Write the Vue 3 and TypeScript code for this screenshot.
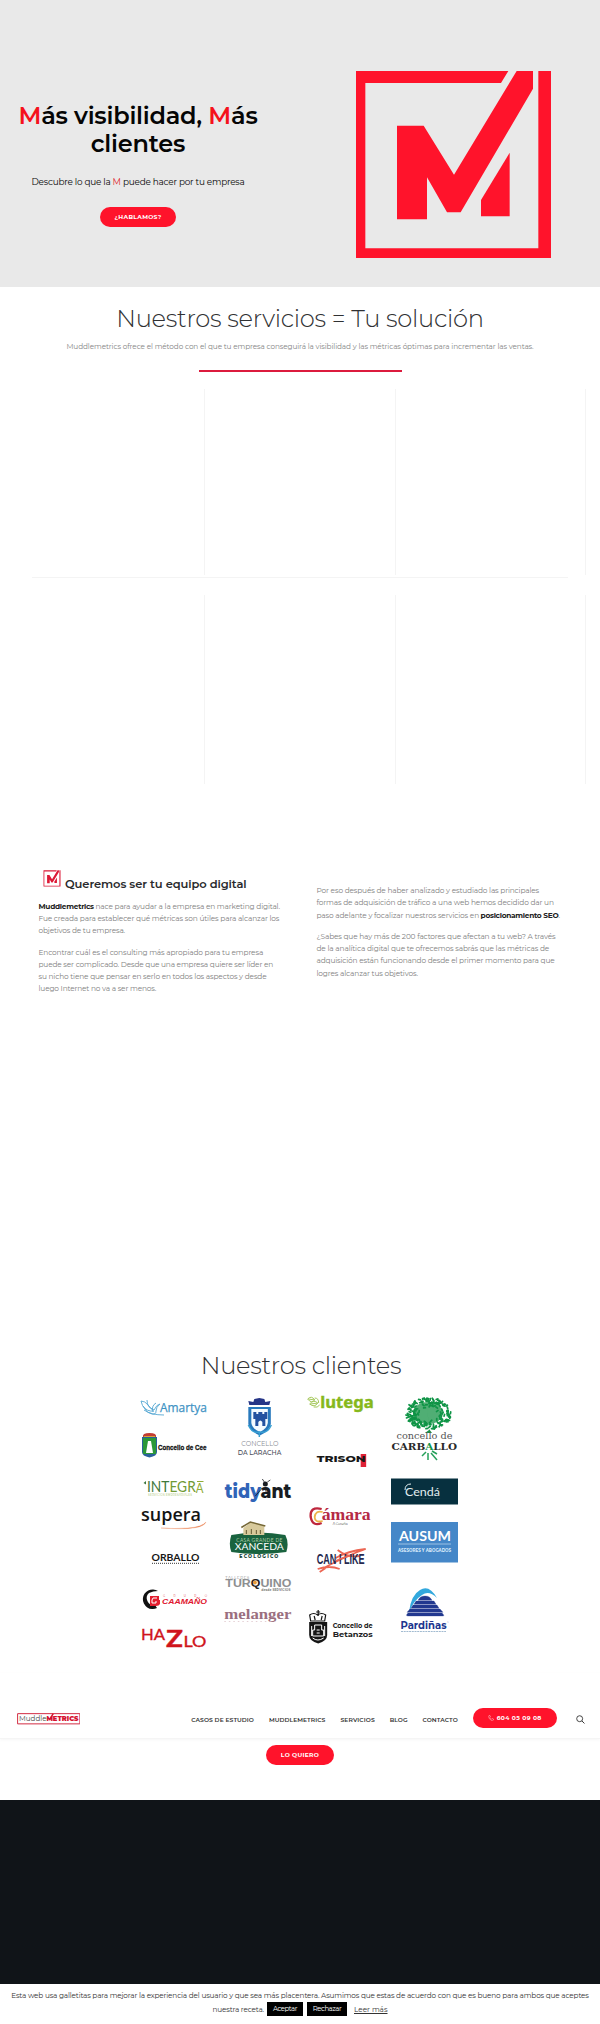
<script setup lang="ts">
interface Segment { text: string; strong?: boolean; width: number }
type Line = Segment[]

// Spreads the letters of a single line so that it fills the given width.
const vFit = {
  mounted(el: HTMLElement, binding: { value: number }) {
    const count = (el.textContent ?? '').trim().length
    const natural = el.getBoundingClientRect().width
    el.style.letterSpacing = `${(binding.value - natural) / count}px`
  },
}

const leftText: Line[][] = [
  [
    [{ text: 'Muddlemetrics', strong: true, width: 55.3 }, { text: 'nace para ayudar a la empresa en marketing digital.', width: 184.5 }],
    [{ text: 'Fue creada para establecer qué métricas son útiles para alcanzar los', width: 240.8 }],
    [{ text: 'objetivos de tu empresa.', width: 86.5 }],
  ],
  [
    [{ text: 'Encontrar cuál es el consulting más apropiado para tu empresa', width: 224.6 }],
    [{ text: 'puede ser complicado. Desde que una empresa quiere ser líder en', width: 234.6 }],
    [{ text: 'su nicho tiene que pensar en serlo en todos los aspectos y desde', width: 228 }],
    [{ text: 'luego Internet no va a ser menos.', width: 117.6 }],
  ],
]
const rightText: Line[][] = [
  [
    [{ text: 'Por eso después de haber analizado y estudiado las principales', width: 222.5 }],
    [{ text: 'formas de adquisición de tráfico a una web hemos decidido dar un', width: 237.3 }],
    [{ text: 'paso adelante y focalizar nuestros servicios en', width: 162.5 }, { text: 'posicionamiento SEO', strong: true, width: 77.8 }, { text: '.', width: 2 }],
  ],
  [
    [{ text: '¿Sabes que hay más de 200 factores que afectan a tu web? A través', width: 239 }],
    [{ text: 'de la analítica digital que te ofrecemos sabrás que las métricas de', width: 232.6 }],
    [{ text: 'adquisición están funcionando desde el primer momento para que', width: 238 }],
    [{ text: 'logres alcanzar tus objetivos.', width: 101.3 }],
  ],
]
const columns = [leftText, rightText]
const nav = [
  { text: 'CASOS DE ESTUDIO', width: 62.8 },
  { text: 'MUDDLEMETRICS', width: 56.4 },
  { text: 'SERVICIOS', width: 34.4 },
  { text: 'BLOG', width: 17.8 },
  { text: 'CONTACTO', width: 35.2 },
]

// Deterministic scatter of leaf strokes around the crown of the tree.
const noise = (n: number) => {
  const v = Math.sin(n * 127.1) * 43758.5453
  return v - Math.floor(v)
}
const leaves = Array.from({ length: 170 }, (_, i) => {
  const a = noise(i + 1) * Math.PI * 2
  const r = 0.35 + 0.65 * Math.sqrt(noise(i + 301))
  return { x: 428.5 + Math.cos(a) * r * 22.5, y: 113.5 + Math.sin(a) * r * 15.5, angle: noise(i + 601) * 180 }
})
</script>

<template>
  <main class="page">
    <section class="hero">
      <div class="hero-copy">
        <h1>
          <span v-fit="239" class="line"><em>M</em>ás visibilidad, <em>M</em>ás</span><br>
          <span v-fit="94.5" class="line">clientes</span>
        </h1>
        <p class="lead"><span v-fit="213" class="line">Descubre lo que la <em>M</em> puede hacer por tu empresa</span></p>
        <a class="pill talk"><span v-fit="47" class="line">¿HABLAMOS?</span></a>
      </div>
      <svg class="hero-logo" viewBox="168 93 585 560" preserveAspectRatio="none">
        <g fill="#ff132b">
          <path d="M168 93H625L603 129H196V624H715V93H753V653H168Z" />
          <path d="M291 257H371L462 404L650 93H699V146L482 516H441L381 411V537H291Z" />
          <path d="M629 338V528H543V479Z" />
        </g>
      </svg>
    </section>

    <section class="services">
      <h2><span v-fit="367.5" class="line">Nuestros servicios = Tu solución</span></h2>
      <p><span v-fit="467" class="line">Muddlemetrics ofrece el método con el que tu empresa conseguirá la visibilidad y las métricas óptimas para incrementar las ventas.</span></p>
      <div class="rule"></div>
      <div class="grid first"><i></i><i></i><i></i></div>
      <div class="separator"></div>
      <div class="grid"><i></i><i></i><i></i></div>
    </section>

    <section class="team">
      <article v-for="(column, c) in columns" :key="c">
        <h3 v-if="c === 0">
          <svg viewBox="150 80 620 590" preserveAspectRatio="none">
            <g fill="#dc1936">
              <path d="M168 93H625L603 129H196V624H715V93H753V653H168Z" />
              <path d="M291 257H371L462 404L650 93H699V146L482 516H441L381 411V537H291Z" />
              <path d="M629 338V528H543V479Z" />
            </g>
          </svg>
          <span v-fit="181.5" class="line">Queremos ser tu equipo digital</span>
        </h3>
        <p v-for="(para, p) in column" :key="p">
          <span v-for="(row, r) in para" :key="r" class="row">
            <span v-for="(s, i) in row" :key="i" v-fit="s.width" class="line" :class="{ strong: s.strong, stop: s.text === '.' }">{{ s.text }}</span>
          </span>
        </p>
      </article>
    </section>

    <section class="clients">
      <h2><span v-fit="200.5" class="line">Nuestros clientes</span></h2>
      <div class="wall">
        <div class="stack">
          <svg viewBox="140 93 67 27" height="27">
            <g fill="none" stroke="#55a7d3" stroke-width=".9"><path d="M141 101q4 0 7 4t6 5q3-6 6-6-4 3-4 7t-4 3q-5-1-7-5-3-3-4-8M147 100q0 7 6 10M156 103q-5 3-3 9M143 106q4 6 11 5M144 110q7 5 20 5" /></g>
            <text x="160" y="111.7" font-size="12.300" textLength="47" lengthAdjust="spacingAndGlyphs" fill="#3f93c4" stroke="#3f93c4" stroke-width=".25" class="open">Amartya</text>
          </svg>
          <svg viewBox="140 120 67 45" height="45">
            <path d="M142 137h15v15q0 4-7.500 5.500-7.500-1.500-7.500-5.500Z" fill="#2a5f9b" /><path d="M143 138h13v16h-13Z" fill="#2b9838" />
            <path d="M148 141h3l1 6 1 6h-7l1-6Z" fill="#fff" /><path d="M143 137q-1-4 6.500-4t6.500 4Z" fill="#c33c32" /><path d="M144 136.500h11" stroke="#d7a438" />
            <text x="158" y="150" font-size="8" font-weight="700" textLength="48.500" lengthAdjust="spacingAndGlyphs" fill="#111" stroke="#111" stroke-width=".3" class="sans">Concello de Cee</text>
          </svg>
          <svg viewBox="140 165 67 37" height="37">
            <path d="M143.500 183l2.500-2v3.500Z" fill="#3a743b" />
            <text x="147" y="191.500" font-size="15" textLength="56.500" lengthAdjust="spacingAndGlyphs" fill="#3f7a3c" class="lato">INT<tspan fill="#719a35">EGR</tspan><tspan dy="1.500" font-size="12.500" fill="#91ad38">A</tspan></text>
            <path d="M197 181.500h6.500" stroke="#91ad38" />
            <text x="148" y="195.700" font-size="2.700" textLength="44" fill="#95b650">SERVICIOS EMPRESARIALES</text>
          </svg>
          <svg viewBox="140 202 67 38" height="38">
            <text x="141" y="220.500" font-size="18" font-weight="600" textLength="60" lengthAdjust="spacingAndGlyphs" fill="#141414" class="open">supera</text>
            <path d="M161 228q42 3 45-6-4 5-18 6t-27 0" fill="#e98355" stroke="#e98355" stroke-width=".3" />
          </svg>
          <svg viewBox="140 240 67 35" height="35">
            <text x="151.500" y="261" font-size="9.300" textLength="48" lengthAdjust="spacingAndGlyphs" fill="#171717" font-weight="700" class="lato">ORBALLO</text>
            <path d="M152 263.300h47" stroke="#333" stroke-width="1" stroke-dasharray="1 1" />
          </svg>
          <svg viewBox="140 275 67 45" height="45">
            <path d="M158 291a9.800 9.800 0 1 0-1 17l-2-3a7 7 0 0 1-6-12q4-2 9-2" fill="#111" /><path d="M150 296h9v4h1v4q-1 2-4 2h-6Z" fill="#e31e2f" /><path d="M157 298h-4l-1 2v3h4v-2" fill="none" stroke="#fff" />
            <text x="163" y="297" font-size="2.800" textLength="44" fill="#d73442">GRUPO</text>
            <text x="162" y="304.400" font-size="7.300" font-style="italic" font-weight="700" textLength="45" lengthAdjust="spacingAndGlyphs" fill="#df1730" class="sans">CAAMAÑO</text>
          </svg>
          <svg viewBox="140 320 67 35" height="35" fill="#d0141b" class="lato" font-weight="400" stroke="#d0141b" stroke-width=".35">
            <text x="141" y="340" font-size="16" textLength="24" lengthAdjust="spacingAndGlyphs">HA</text>
            <text x="166" y="346.500" font-size="23.500" font-weight="700" textLength="17" lengthAdjust="spacingAndGlyphs">Z</text>
            <text x="183.500" y="346.500" font-size="15.500" textLength="23" lengthAdjust="spacingAndGlyphs">LO</text>
          </svg>
        </div>
        <div class="stack">
          <svg viewBox="223.67 93 67 77" height="77">
            <path d="M248 107h22.500v17q-1 7-11 11.500-10.500-4.500-11.500-11.500Z" fill="#2879bd" /><path d="M251 109h16.500v14q-1 6-8 9-7.500-3-8.500-9Z" fill="#f4fbff" />
            <path d="M249 105l-1-4 5 1 1-3 5-1 5 1 1 3 5-1-1 4Z" fill="#263587" /><path d="M253 112h3v2h2v-2h4v2h2v-2h3v7h-2v7h-3v-4q-2-3-4 0v4h-3v-7h-2Z" fill="#2452a0" />
            <path d="M248 125q4 9 11 7v5m12-12q-4 9-11 7" fill="none" stroke="#39a0d3" stroke-width="1.500" />
            <text x="241" y="146" font-size="7" textLength="37" lengthAdjust="spacingAndGlyphs" fill="#8c8f98">CONCELLO</text><text x="237.500" y="154.500" font-size="7" font-weight="500" textLength="43.500" lengthAdjust="spacingAndGlyphs" fill="#494c59">DA LARACHA</text>
          </svg>
          <svg viewBox="223.67 170 67 46" height="46">
            <text x="224.500" y="198" font-size="20" font-weight="800" textLength="66.500" lengthAdjust="spacingAndGlyphs" fill="#3064b8">tidy<tspan fill="#181c22">ant</tspan></text>
            <circle cx="265" cy="184" r="2.500" fill="#181c22" /><path d="M264 182l-2-3m5 3 3-2m-15 16 7-8m3 0 1 5" fill="none" stroke="#181c22" stroke-width=".8" />
          </svg>
          <svg viewBox="223.67 216 67 51" height="51">
            <path d="M231 235q28-5 54 0 4 8 1 17-27 4-55 0-3-8 0-17" fill="#1a633f" />
            <path d="M243 235v-7l8-6 13 4v9Z" fill="#d7c99b" /><path d="M241 227.500l9-5.500 15 4" stroke="#756736" fill="none" stroke-width="1.500" /><path d="M246 230v4m5-5v5m5-4v4m4-4v4" stroke="#635b34" />
            <text x="236" y="241.500" font-size="4.900" textLength="46" fill="#acd0a7" class="lato">CASA GRANDE DE</text><text x="234.500" y="250" font-size="10" textLength="49" lengthAdjust="spacingAndGlyphs" fill="#fff" class="lato">XANCEDA</text><text x="239" y="258" font-size="4.700" font-weight="800" textLength="39" fill="#1c4a3b">ECOLOGICO</text>
          </svg>
          <svg viewBox="223.67 267 67 37" height="37">
            <text x="225" y="279" font-size="4" textLength="24" fill="#888">TALLERES</text>
            <text x="225" y="286.500" font-size="10.500" font-weight="700" textLength="66" lengthAdjust="spacingAndGlyphs" fill="#8e8f91" class="sans">TUR<tspan fill="#242322">Q</tspan>UINO</text><circle cx="254.500" cy="282.500" r="2" fill="#e79a3b" />
            <text x="261" y="291" font-size="3" textLength="29" font-weight="700" fill="#777">desde SERVICIOS</text>
          </svg>
          <svg viewBox="223.67 304 67 36" height="36">
            <text x="224" y="318.500" font-size="15.500" font-weight="700" textLength="67" lengthAdjust="spacingAndGlyphs" fill="#9b6f7f" class="serif">melanger</text><path d="M224 321.500h53" stroke="#d8bbc3" stroke-width=".7" stroke-dasharray="1.500 3" />
          </svg>
        </div>
        <div class="stack">
          <svg viewBox="307.33 93 67 50" height="50">
            <g fill="none" stroke="#a5c85b"><path d="M308 99q4-4 7 1-3 4-7-1M310 104q4-5 8-1-3 5-8 1M315 98q4 0 4 5M314 107q4 1 6-2M309 99l6 1m-4 4 7-1" /></g>
            <text x="320.500" y="107.500" font-size="16" font-weight="700" textLength="53.500" lengthAdjust="spacingAndGlyphs" fill="#86b81c" stroke="#86b81c" stroke-width=".4" class="noto">lutega</text>
          </svg>
          <svg viewBox="307.33 143 67 57" height="57">
            <path d="M361 154h5.500v13H361Z" fill="#df2136" /><text x="317" y="162" font-size="8" font-weight="800" textLength="49" lengthAdjust="spacingAndGlyphs" fill="#171717">TRISON</text>
          </svg>
          <svg viewBox="307.33 200 67 36" height="36">
            <path d="M322 209q-12-3-11 8 2 10 11 6" stroke="#be273d" stroke-width="2.300" fill="none" /><path d="M323 212q-7-2-8 5 0 6 8 4" fill="none" stroke="#edb34a" stroke-width="1.800" />
            <text x="322" y="220" font-size="16" font-weight="700" textLength="49" lengthAdjust="spacingAndGlyphs" fill="#b52a45" class="serif">ámara</text><text x="333" y="225" font-size="3.300" textLength="15" fill="#333">A Coruña</text>
          </svg>
          <svg viewBox="307.33 236 67 64" height="64">
            <path d="M324 268q27-14 42-19-18 2-30 9M338 250q10 8 22 6m-42 13q12-4 22 0m-20 3 6-4" fill="none" stroke="#ec6653" stroke-width="1.800" />
            <text x="317" y="263.500" font-size="14" font-weight="700" textLength="48" lengthAdjust="spacingAndGlyphs" fill="#25284f" class="sans">CAN I LIKE</text><path d="M336 261q8-4 14-5" stroke="#ec6653" stroke-width="1.500" fill="none" />
          </svg>
          <svg viewBox="307.33 300 67 55" height="55">
            <path d="M309.500 322h18v13q0 6-9 8.500-9-2.500-9-8.500Z" fill="#151515" /><path d="M311 321l-1-6q4-3 8 0 4-3 8 0l-1 6ZM318.500 310v6m-2-4h4m-6 4 1 4m7-4-1 4" fill="none" stroke="#151515" stroke-width="1.200" />
            <path d="M315 325h7v5h2v6h-11v-6h2Zm2 5h3m-3 3h3m-8-7v10m13-10v10m-12 2q5 4 11 0" fill="none" stroke="#fff" stroke-width="1" />
            <g font-weight="700" fill="#222"><text x="333" y="327.500" font-size="7" textLength="40" lengthAdjust="spacingAndGlyphs">Concello de</text><text x="333" y="336.500" font-size="7.800" textLength="40" lengthAdjust="spacingAndGlyphs">Betanzos</text></g>
          </svg>
        </div>
        <div class="stack">
          <svg viewBox="391 93 67 77" height="77">
            <path d="M427 104l2 26-4 3h7l-3-4Z" fill="#159345" /><ellipse cx="428" cy="113" rx="15" ry="11" fill="#159345" opacity=".75" />
            <rect v-for="(leaf, i) in leaves" :key="i" :x="leaf.x - 1.7" :y="leaf.y - .8" width="3.400" height="1.700" rx=".6" fill="#0f9446" :transform="`rotate(${leaf.angle} ${leaf.x} ${leaf.y})`" />
            <text x="396.500" y="138.500" font-size="9.500" textLength="56" lengthAdjust="spacingAndGlyphs" fill="#555" class="slab">concello de</text>
            <text x="391.500" y="149.500" font-size="10" font-weight="700" textLength="65.500" lengthAdjust="spacingAndGlyphs" fill="#292929" class="slab">CARB<tspan fill="#13954a">A</tspan>LLO</text>
            <path d="M426 152l-4 4m6-3v7m3-7 6 7m-5-9 5 3" stroke="#27a15b" stroke-width="1.500" />
          </svg>
          <svg viewBox="391 170 67 44" height="44"><path d="M391 178.500h67v26h-67Z" fill="#07303f" /><path d="M405 190q0-6 6-6" stroke="#e2eef0" fill="none" /><text x="405" y="195.500" font-size="12" textLength="35" lengthAdjust="spacingAndGlyphs" fill="#e2eef0" class="lato">Cendá</text><text x="421" y="199" font-size="2.300" textLength="19" fill="#58737d">CONSULTING</text></svg>
          <svg viewBox="391 214 67 60" height="60"><path d="M391 222h67v40.500h-67Z" fill="#4587c8" /><text x="399" y="241" font-size="14" font-weight="700" textLength="52" lengthAdjust="spacingAndGlyphs" fill="#fff" class="lato">AUSUM</text><path d="M398 244h53" stroke="#bfd8ef" stroke-width=".7" /><text x="398" y="252" font-size="4.500" font-weight="700" textLength="53" lengthAdjust="spacingAndGlyphs" fill="#dcecfb">ASESORES Y ABOGADOS</text></svg>
          <svg viewBox="391 274 67 81" height="81"><path d="M409 312q2-17 11-22 9-6 17 8-8-8-15-3-8 5-13 17" fill="#32a8dd" /><path d="M425 296q-5 0-7 4.300h14q-2-4.300-7-4.300m-9 5-2 3.300h22l-2-3.300Zm-3 4-2 3.300h28l-2-3.300Zm-3 4-3 3.300h36l-3-3.300Zm-2 4q-3 3 0 3h35q2 0-1-3Z" fill="#22398f" stroke="#22398f" stroke-width=".3" /><text x="400.500" y="329" font-size="10" font-weight="700" textLength="46" lengthAdjust="spacingAndGlyphs" fill="#20358e">Pardiñas</text><text x="447" y="323" font-size="2" fill="#20358e">®</text><path d="M401 331.500h45" stroke="#8aa9c5" stroke-width=".8" stroke-dasharray="2 .7" /></svg>
        </div>
      </div>
    </section>

    <header class="bar">
      <svg class="brand" viewBox="0 0 64 12"><path d="M.6.600H63.400V10.900H.6Z" fill="none" stroke="#d22942" stroke-width="1" /><text x="2" y="8" font-size="7.200" textLength="60" lengthAdjust="spacingAndGlyphs" fill="#444">Muddle<tspan font-size="6.800" font-weight="900" fill="#d5122f">METRICS</tspan></text><path d="M33 6.500l3.500-6" stroke="#d5122f" stroke-width="1.500" /></svg>
      <nav><a v-for="item in nav" :key="item.text" v-fit="item.width" class="line">{{ item.text }}</a></nav>
      <a class="pill phone"><svg viewBox="0 0 12 12"><path d="M2 1 4 1 5 4 3.500 5Q4.500 8 7 8.500L8 7 11 8V10Q10 12 7 11 1 8 1 2Z" fill="none" stroke="#ffc2c8" /></svg><span v-fit="45" class="line">604 05 09 08</span></a>
      <svg class="search" viewBox="0 0 9 9"><circle cx="3.700" cy="3.700" r="3" fill="none" stroke="#333" stroke-width=".9" /><path d="m5.900 5.900 2.600 2.600" stroke="#333" /></svg>
    </header>

    <section class="cta"><a class="pill want"><span v-fit="38.5" class="line">LO QUIERO</span></a></section>
    <footer></footer>
    <aside class="cookies">
      <div><span v-fit="577.5" class="line">Esta web usa galletitas para mejorar la experiencia del usuario y que sea más placentera. Asumimos que estas de acuerdo con que es bueno para ambos que aceptes</span></div>
      <div class="choices"><span v-fit="51.5" class="line">nuestra receta.</span><button class="accept"><span v-fit="24" class="line">Aceptar</span></button><button class="reject"><span v-fit="28.5" class="line">Rechazar</span></button><a v-fit="33.5" class="line">Leer más</a></div>
    </aside>
  </main>
</template>

<style>
body { margin: 0; background: #fff; }
</style>

<style scoped>
.page { width: 600px; height: 2024px; overflow: hidden; background: #fff; font-family: Montserrat, Inter, "Liberation Sans", sans-serif; color: #303133; }
.page * { box-sizing: border-box; }
h1, h2, h3, p { margin: 0; font-weight: inherit; }
.line { display: inline-block; white-space: nowrap; }
em { font-style: normal; color: #f5121c; }
.pill { display: flex; align-items: center; justify-content: center; height: 20px; border-radius: 10px; background: #ff132b; color: #fff; font-size: 6px; font-weight: 700; line-height: 10px; }
.hero { height: 286.500px; display: flex; background: #e9e9e9; }
.hero-copy { width: 276px; padding-top: 101.500px; display: flex; flex-direction: column; align-items: center; text-align: center; color: #050505; }
h1 { font-size: 24px; font-weight: 600; line-height: 28.400px; }
.lead { margin-top: 16.500px; font-size: 8.900px; line-height: 14px; }
.lead em { color: #e0343c; }
.talk { width: 76px; margin-top: 18px; }
.hero-logo { width: 195px; height: 187px; margin: 71px 0 0 79.500px; }
.services { height: 563.500px; display: flex; flex-direction: column; align-items: center; padding-top: 16px; }
h2 { font-size: 24.200px; font-weight: 300; line-height: 31px; text-align: center; }
.services p { margin-top: 7px; font-size: 7.300px; line-height: 12px; color: #858585; }
.rule { width: 203px; height: 2px; margin-top: 17px; background: #dc1b3d; }
.grid { align-self: stretch; display: flex; justify-content: flex-end; padding-right: 14px; margin-top: 17px; height: 189px; }
.grid.first { height: 186px; margin-top: 17px; }
.grid i { width: 190.500px; border-right: 1px solid #f4f4f4; }
.separator { width: 536px; height: 1px; margin-top: 2px; background: #f4f4f4; }
.team { height: 480px; display: flex; padding: 0 38.500px; font-size: 7.400px; line-height: 12.300px; color: #808080; }
.team article { width: 278px; padding-top: 18px; }
.team article + article { width: 244px; padding-top: 35px; }
.team p { margin-bottom: 8.900px; }
h3 { display: flex; align-items: flex-end; gap: 4.500px; height: 24px; margin: 0 0 8.800px 4px; font-size: 11.500px; font-weight: 600; line-height: 15px; color: #292a2c; }
h3 svg { width: 18px; height: 17px; margin-bottom: 5.500px; }
h3 span { position: relative; top: -.5px; }
.row { display: flex; gap: 1.600px; white-space: nowrap; }
.strong { color: #222; font-weight: 700; }
.stop { margin-left: -1.600px; }
.clients { height: 343px; padding-top: 20px; }
.clients h2 { padding-left: 2px; }
.wall { display: flex; gap: 16.670px; padding: 12px 0 0 140px; }
.stack { width: 67px; }
.stack svg { display: block; width: 67px; overflow: visible; }
.sans { font-family: "Liberation Sans", sans-serif; }
.open { font-family: "Open Sans", sans-serif; }
.lato { font-family: Lato, sans-serif; }
.noto { font-family: "Noto Sans", sans-serif; }
.serif { font-family: "Liberation Serif", serif; }
.slab { font-family: "DejaVu Serif", serif; }
.bar { height: 66px; padding: 36px 15px 0 17px; display: flex; align-items: flex-start; background: #fff; border-bottom: 1px solid #f5f5f5; box-shadow: 0 1px 3px rgba(0, 0, 0, .04); }
.brand { width: 64px; height: 12px; margin-top: 4px; }
nav { display: flex; gap: 15px; margin: 5px 15px 0 110.700px; font-size: 6px; font-weight: 600; line-height: 12px; color: #333; }
.phone { width: 84.500px; margin-top: -1px; gap: 3px; }
.phone svg { width: 6px; height: 6px; }
.search { width: 9px; height: 9px; margin: 5.500px 0 0 19.500px; }
.cta { height: 60.500px; padding-top: 6px; }
.want { width: 68.500px; margin: 0 auto; }
footer { height: 184.500px; background: #101418; }
.cookies { height: 40px; padding-top: 5px; text-align: center; background: #fff; font-size: 7.300px; line-height: 13px; color: #333; }
.choices { display: flex; justify-content: center; align-items: center; height: 14px; }
button { height: 14px; padding: 0; border: 0; background: #000; color: #fff; font: 6.900px/14px Montserrat, Inter, sans-serif; }
.accept { width: 36px; margin: 0 4px 0 3px; }
.reject { width: 40px; margin-right: 7px; }
.choices a { text-decoration: underline; }
</style>
